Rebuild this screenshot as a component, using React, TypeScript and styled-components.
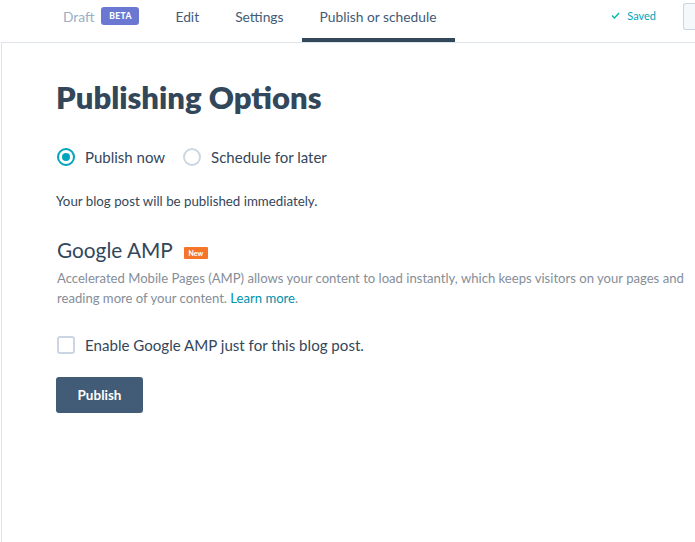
import React from "react";
import styled, { createGlobalStyle } from "styled-components";

const Global = createGlobalStyle`
  html, body { margin: 0; padding: 0; background: #fff; }
  body { font-family: Lato, "Noto Sans", sans-serif; color: #33475b; }
  * { box-sizing: border-box; }
`;

const Page = styled.div`
  width: 695px;
  height: 542px;
  overflow: hidden;
  display: flex;
  flex-direction: column;
`;

const Header = styled.div`
  height: 42px;
  display: flex;
  align-items: stretch;
  padding-left: 45px;
`;

const Tab = styled.div<{ $active?: boolean }>`
  display: flex;
  align-items: center;
  gap: 7px;
  padding: 0 18px 6px;
  font-size: 13.8px;
  color: #425b76;
  border-bottom: 4px solid ${(p) => (p.$active ? "#33475b" : "transparent")};
`;

const Muted = styled.span`
  color: #99afc4;
`;

const Badge = styled.span<{ $bg: string }>`
  background: ${(p) => p.$bg};
  color: #fff;
  font-weight: 900;
  border-radius: 3px;
  display: inline-flex;
  align-items: center;
  justify-content: center;
`;

const BetaBadge = styled(Badge)`
  width: 38px;
  height: 18px;
  font-size: 8.5px;
  letter-spacing: 0.4px;
`;

const NewBadge = styled(Badge)`
  width: 24px;
  height: 12px;
  font-size: 7px;
  border-radius: 1px;
  margin-top: 6px;
`;

const Spacer = styled.div`
  flex: 1;
`;

const Saved = styled.div`
  display: flex;
  align-items: center;
  gap: 7px;
  color: #00a4bd;
  font-size: 11px;
  padding-bottom: 11px;
  margin-right: 27px;
`;

const GhostButton = styled.div`
  width: 12px;
  height: 27px;
  margin-top: 3px;
  border: 1px solid #cbd6e2;
  border-right: none;
  border-radius: 3px 0 0 3px;
  background: #f5f8fa;
`;

const Panel = styled.div`
  flex: 1;
  margin-left: 1px;
  border-top: 1px solid #dfe3eb;
  border-left: 1px solid #dfe3eb;
  padding: 36px 0 0 54px;
  display: flex;
  flex-direction: column;
  align-items: flex-start;
`;

const Title = styled.h1`
  margin: 0;
  font-size: 31px;
  font-weight: 800;
  line-height: 36px;
  color: #33475b;
`;

const RadioRow = styled.div`
  display: flex;
  align-items: center;
  gap: 18px;
  margin-top: 33px;
  margin-left: 1px;
`;

const Option = styled.label`
  display: flex;
  align-items: center;
  gap: 10px;
  font-size: 15px;
  color: #33475b;
`;

const Radio = styled.span<{ $checked?: boolean }>`
  width: 18px;
  height: 18px;
  border-radius: 50%;
  border: 2px solid ${(p) => (p.$checked ? "#00a4bd" : "#cbd6e2")};
  display: inline-flex;
  align-items: center;
  justify-content: center;
  &::after {
    content: "";
    width: 8px;
    height: 8px;
    border-radius: 50%;
    background: ${(p) => (p.$checked ? "#00a4bd" : "transparent")};
  }
`;

const Note = styled.p`
  margin: 27px 0 0 0;
  font-size: 13.3px;
  color: #33475b;
`;

const SubHeading = styled.div`
  margin-top: 28px;
  display: flex;
  align-items: center;
  gap: 11px;
  margin-left: 1px;
`;

const H2 = styled.h2`
  margin: 0;
  font-size: 20.8px;
  font-weight: 400;
  color: #33475b;
`;

const Desc = styled.p`
  margin: 6px 0 0 1px;
  font-size: 13.1px;
  line-height: 20px;
  color: #858e99;
  max-width: 640px;
`;

const Link = styled.a`
  color: #0091ae;
  text-decoration: none;
`;

const CheckRow = styled.label`
  margin-top: 28px;
  margin-left: 1px;
  display: flex;
  align-items: center;
  gap: 10px;
  font-size: 15.1px;
  color: #33475b;
`;

const Box = styled.span`
  width: 18px;
  height: 18px;
  border: 2px solid #cbd6e2;
  border-radius: 3px;
`;

const Button = styled.button`
  margin-top: 23px;
  width: 87px;
  height: 36px;
  border: none;
  border-radius: 3px;
  background: #425b76;
  color: #fff;
  font-family: inherit;
  font-weight: 700;
  font-size: 13.5px;
`;

export default function App() {
  return (
    <Page>
      <Global />
      <Header>
        <Tab>
          <Muted>Draft</Muted>
          <BetaBadge $bg="#6a78d1">BETA</BetaBadge>
        </Tab>
        <Tab>Edit</Tab>
        <Tab>Settings</Tab>
        <Tab $active>Publish or schedule</Tab>
        <Spacer />
        <Saved>
          <svg width="9" height="7" viewBox="0 0 9 7">
            <path d="M1 3.5 L3.4 6 L8 1" fill="none" stroke="#00bda5" strokeWidth="1.4" />
          </svg>
          Saved
        </Saved>
        <GhostButton />
      </Header>
      <Panel>
        <Title>Publishing Options</Title>
        <RadioRow>
          <Option>
            <Radio $checked />
            Publish now
          </Option>
          <Option>
            <Radio />
            Schedule for later
          </Option>
        </RadioRow>
        <Note>Your blog post will be published immediately.</Note>
        <SubHeading>
          <H2>Google AMP</H2>
          <NewBadge $bg="#f5762b">New</NewBadge>
        </SubHeading>
        <Desc>
          Accelerated Mobile Pages (AMP) allows your content to load instantly, which keeps visitors on your pages and
          reading more of your content. <Link href="#">Learn more</Link>.
        </Desc>
        <CheckRow>
          <Box />
          Enable Google AMP just for this blog post.
        </CheckRow>
        <Button>Publish</Button>
      </Panel>
    </Page>
  );
}
